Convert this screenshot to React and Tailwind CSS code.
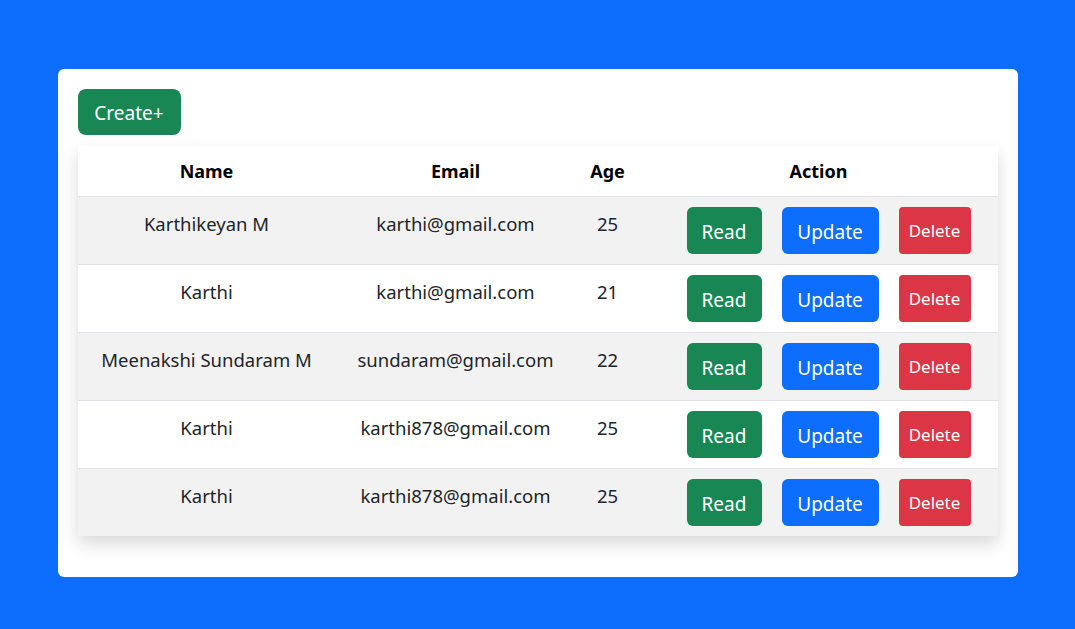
import React from 'react';

const users = [
    { id: 1, name: 'Karthikeyan M', email: 'karthi@gmail.com', age: 25 },
    { id: 2, name: 'Karthi', email: 'karthi@gmail.com', age: 21 },
    { id: 3, name: 'Meenakshi Sundaram M', email: 'sundaram@gmail.com', age: 22 },
    { id: 4, name: 'Karthi', email: 'karthi878@gmail.com', age: 25 },
    { id: 5, name: 'Karthi', email: 'karthi878@gmail.com', age: 25 },
];

const App = () => {
    return (
        <div className="min-h-screen bg-[#0d6efd] pt-[69px] font-['Noto_Sans',sans-serif] text-[#212529]">
            <div className="mx-auto w-[960px] bg-white rounded-md px-5 pt-5 pb-[41px]">
                <button className="h-[46px] w-[103px] rounded-lg bg-[#198754] text-white text-[19px] leading-none pt-[3px]">
                    Create+
                </button>
                <table className="mt-[11px] w-[920px] table-fixed border-collapse shadow-[0_8px_16px_rgba(0,0,0,0.15)]">
                    <colgroup>
                        <col className="w-[258px]" />
                        <col className="w-[240px]" />
                        <col className="w-[64px]" />
                        <col className="w-[358px]" />
                    </colgroup>
                    <thead>
                        <tr className="bg-white border-b border-[#dee2e6]">
                            <th className="pt-[12px] pb-[11px] text-[18px] leading-[27px] font-bold text-black">Name</th>
                            <th className="pt-[12px] pb-[11px] text-[18px] leading-[27px] font-bold text-black">Email</th>
                            <th className="pt-[12px] pb-[11px] text-[18px] leading-[27px] font-bold text-black">Age</th>
                            <th className="pt-[12px] pb-[11px] text-[18px] leading-[27px] font-bold text-black">Action</th>
                        </tr>
                    </thead>
                    <tbody>
                        {users.map((u, i) => (
                            <tr key={u.id} className={`${i % 2 === 0 ? 'bg-[#f2f2f2]' : 'bg-white'} ${i < users.length - 1 ? 'border-b border-[#dee2e6]' : ''}`}>
                                <td className="align-top pt-[13px] text-center text-[18.5px] leading-[27px] whitespace-nowrap">{u.name}</td>
                                <td className="align-top pt-[13px] text-center text-[18.5px] leading-[27px] whitespace-nowrap">{u.email}</td>
                                <td className="align-top pt-[13px] text-center text-[18.5px] leading-[27px]">{u.age}</td>
                                <td className="align-top py-[10px]">
                                    <div className="flex gap-5 pl-[47px]">
                                        <button className="h-[47px] w-[75px] rounded-md bg-[#198754] text-white text-[19px] pt-[3px]">Read</button>
                                        <button className="h-[47px] w-[97px] rounded-md bg-[#0d6efd] text-white text-[19px] pt-[3px]">Update</button>
                                        <button className="h-[47px] w-[72px] rounded-[4px] bg-[#dc3545] text-white text-[17px]">Delete</button>
                                    </div>
                                </td>
                            </tr>
                        ))}
                    </tbody>
                </table>
            </div>
        </div>
    );
};

export default App;
